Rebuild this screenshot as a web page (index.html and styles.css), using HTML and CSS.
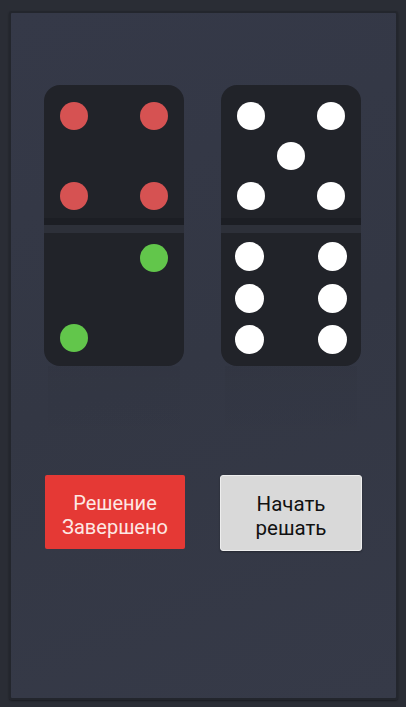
FILE: index.html
```html
<!DOCTYPE html>
<html lang="ru">
<head>
<meta charset="utf-8">
<link rel="stylesheet" href="styles.css">
</head>
<body>
<div class="panel">
  <div class="dominoes">
    <div class="domino">
      <div class="half top">
        <span class="pip red" style="grid-area:1/1"></span>
        <span class="pip red" style="grid-area:1/3"></span>
        <span class="pip red" style="grid-area:3/1"></span>
        <span class="pip red" style="grid-area:3/3"></span>
      </div>
      <div class="divider"></div>
      <div class="half bottom">
        <span class="pip green" style="grid-area:1/3"></span>
        <span class="pip green" style="grid-area:3/1"></span>
      </div>
    </div>
    <div class="domino">
      <div class="half top">
        <span class="pip white" style="grid-area:1/1"></span>
        <span class="pip white" style="grid-area:1/3"></span>
        <span class="pip white" style="grid-area:2/2"></span>
        <span class="pip white" style="grid-area:3/1"></span>
        <span class="pip white" style="grid-area:3/3"></span>
      </div>
      <div class="divider"></div>
      <div class="half bottom six">
        <span class="pip white big" style="grid-area:1/1"></span>
        <span class="pip white big" style="grid-area:1/3"></span>
        <span class="pip white big" style="grid-area:2/1"></span>
        <span class="pip white big" style="grid-area:2/3"></span>
        <span class="pip white big" style="grid-area:3/1"></span>
        <span class="pip white big" style="grid-area:3/3"></span>
      </div>
    </div>
  </div>
  <div class="buttons">
    <button class="btn btn-red">Решение<br>Завершено</button>
    <button class="btn btn-grey">Начать<br>решать</button>
  </div>
</div>
</body>
</html>
```
FILE: styles.css
```css
html, body {
  margin: 0;
  padding: 0;
}
body {
  background: #2a2d35;
  width: 406px;
  height: 707px;
  overflow: hidden;
  font-family: Roboto, "Noto Sans", sans-serif;
}
.panel {
  box-sizing: border-box;
  margin: 11px 8px 0 9px;
  width: 389px;
  height: 689px;
  border: 2px solid #23262d;
  border-radius: 3px;
  background: linear-gradient(160deg, #353948 0%, #333744 50%, #363a48 100%);
  box-shadow: 0 1px 2px rgba(0,0,0,0.4);
  padding-top: 72px;
}
.dominoes {
  display: grid;
  grid-template-columns: 140px 140px;
  column-gap: 37px;
  padding-left: 33px;
}
.domino {
  position: relative;
  width: 140px;
  display: flex;
  flex-direction: column;
}
.domino::after {
  content: "";
  position: absolute;
  left: 4px;
  right: 4px;
  top: 281px;
  height: 84px;
  background: linear-gradient(180deg, rgba(0,0,0,0.03), rgba(0,0,0,0));
  border-radius: 0 0 12px 12px;
}
.half {
  background: #212329;
  height: 133px;
  display: grid;
  box-sizing: border-box;
  grid-template-columns: repeat(3, 40px);
  place-items: center;
}
.half.top {
  border-radius: 16px 16px 0 0;
  padding: 11px 10px 0;
  grid-template-rows: repeat(3, 40px);
}
.half.bottom {
  border-radius: 0 0 16px 16px;
  padding: 5px 10px 0;
  grid-template-rows: repeat(3, 40px);
}
.half.bottom.six {
  padding: 3px 9px 0 8px;
  grid-template-columns: 40px 43px 40px;
  grid-template-rows: repeat(3, 41.5px);
}
.divider {
  height: 7px;
  background: #1c1e24;
  border-bottom: 8px solid #2d3039;
}
.pip {
  width: 28px;
  height: 28px;
  border-radius: 50%;
}
.pip.big {
  width: 29px;
  height: 29px;
}
.red { background: #d65252; }
.green { background: #62c64b; }
.white { background: #ffffff; }
.buttons {
  display: grid;
  grid-template-columns: 140px 142px;
  column-gap: 35px;
  padding-left: 34px;
  margin-top: 109px;
  align-items: start;
}
.btn {
  font-family: Roboto, "Noto Sans", sans-serif;
  font-size: 20px;
  line-height: 24px;
  border: none;
  padding: 6px 0 0;
  margin: 0;
  text-align: center;
  cursor: pointer;
}
.btn-red {
  height: 74px;
  background: #e53935;
  color: #fde8e4;
  border-radius: 2px;
}
.btn-grey {
  height: 76px;
  background: #d9d9d9;
  color: #111111;
  border: 1px solid #eeeeee;
  border-radius: 3px;
  box-shadow: 0 1px 2px rgba(0,0,0,0.3);
  font-size: 20.5px;
}
```
